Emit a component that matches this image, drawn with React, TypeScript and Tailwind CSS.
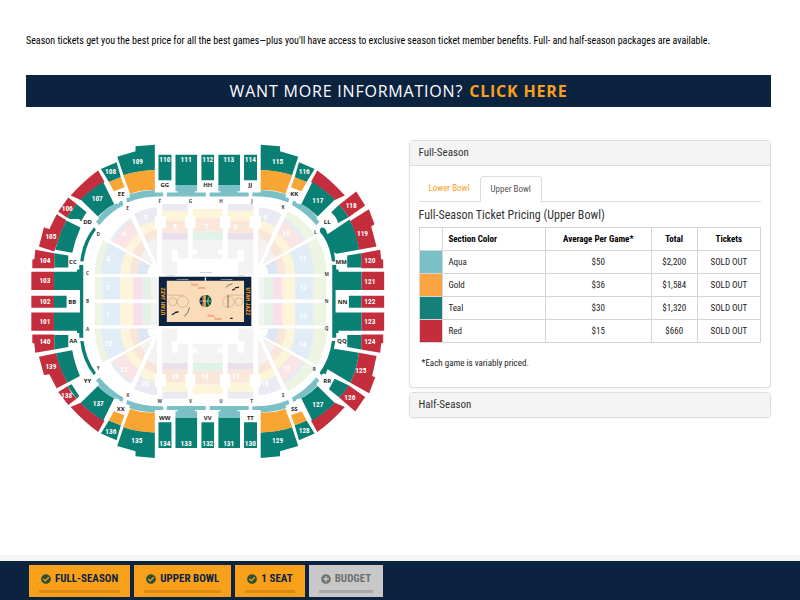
import { FaCheckCircle, FaPlusCircle } from "react-icons/fa";

const TEAL = "#0a8075";
const RED = "#c32d3c";
const GOLD = "#f9a534";
const AQUA = "#7ac0c6";

type Label = [string, number, number];

const sectionLabels: Label[] = [
  ["109", 353, 78], ["110", 435, 74], ["111", 499, 74], ["112", 564, 74], ["113", 627, 74], ["114", 692, 74],
  ["115", 774, 80], ["116", 854, 110], ["117", 895, 195], ["118", 995, 210], ["119", 1029, 296], ["120", 1051, 377],
  ["121", 1051, 439], ["122", 1051, 500], ["123", 1051, 561], ["124", 1051, 621], ["125", 1024, 706], ["126", 991, 788],
  ["127", 895, 808], ["128", 854, 888], ["129", 774, 918], ["130", 692, 925], ["131", 627, 925], ["132", 564, 925],
  ["133", 499, 925], ["134", 435, 925], ["135", 351, 917], ["136", 273, 889], ["137", 235, 807], ["138", 140, 781],
  ["139", 93, 695], ["140", 75, 621], ["101", 75, 561], ["102", 75, 500], ["103", 75, 438], ["104", 75, 377],
  ["105", 93, 306], ["106", 142, 219], ["107", 232, 190], ["108", 272, 110],
];

const portalLabels: Label[] = [
  ["EE", 304, 177], ["GG", 435, 149], ["HH", 564, 149], ["JJ", 692, 149], ["KK", 824, 176], ["LL", 923, 261],
  ["MM", 965, 382], ["NN", 969, 500], ["QQ", 967, 617], ["RR", 923, 740], ["SS", 824, 824], ["TT", 692, 849],
  ["VV", 564, 849], ["WW", 435, 849], ["XX", 303, 823], ["YY", 203, 740], ["AA", 160, 617], ["BB", 157, 500],
  ["CC", 159, 382], ["DD", 203, 261],
];

const rowLabels: Label[] = [
  ["F", 420, 199], ["G", 512, 199], ["H", 604, 199], ["J", 697, 199], ["K", 790, 216], ["L", 887, 292],
  ["M", 921, 420], ["N", 921, 501], ["Q", 921, 581], ["R", 884, 705], ["S", 790, 783], ["T", 696, 800],
  ["U", 604, 800], ["V", 512, 800], ["W", 420, 800], ["X", 324, 781], ["Y", 235, 702], ["A", 203, 585],
  ["B", 203, 500], ["C", 203, 416], ["D", 235, 298], ["E", 323, 221],
];

const bowlLabels: Label[] = [
  ["2", 265, 457], ["1", 265, 540], ["3", 265, 371], ["4", 313, 297], ["5", 377, 246], ["6", 466, 273],
  ["7", 560, 273], ["8", 648, 273], ["9", 737, 246], ["10", 800, 295], ["11", 849, 370], ["12", 851, 457],
  ["13", 851, 542], ["14", 849, 628], ["15", 800, 702], ["16", 735, 745], ["17", 648, 726], ["18", 556, 726],
  ["19", 466, 726], ["20", 377, 745], ["21", 313, 703], ["22", 265, 627],
];

function Labels({ items, size, color, font }: { items: Label[]; size: number; color: string; font: string }) {
  return (
    <g fontSize={size} fill={color} fontFamily={font} fontWeight="700" textAnchor="middle">
      {items.map(([text, x, y]) => (
        <text key={text} x={x} y={y + size * 0.36}>{text}</text>
      ))}
    </g>
  );
}

/* One quarter of the upper bowl, without the corner sections that differ per side. */
function UpperQuarter() {
  return (
    <g>
      <path fill={RED} d="M34 411H102V466H34ZM46 345L103 355V400H37V374L43 373ZM152 182Q195 135 235 107L254 141Q215 162 182 195Z" />
      <path fill={TEAL} d="M102 411H171V404H178V390H190V500H180V466H102ZM103 355L145 362V398H103ZM222 277L228 285Q198 325 191 380H181Q186 322 222 277Z" />
      <path fill={TEAL} d="M182 194Q215 162 250 141L283 208Q258 220 234 245ZM243 102L290 82L303 127L267 141ZM292 65L347 49V34L405 29V105Q350 108 311 121ZM416 59H455V136H416ZM467 59H532V150H467Z" />
      <path fill={GOLD} d="M267 141L303 127L314 157L282 169ZM310 121Q350 107 405 105V166Q365 163 331 177Z" />
      <path fill={AQUA} d="M467 150H532V169H526V173H558V185H441V173H474V169H467ZM319 191L331 186L328 179Q365 166 405 166V173H430V184Q370 183 322 203ZM228 260L238 271Q270 232 311 210L307 197L300 200L296 206L283 208Q255 222 236 246V254Z" />
    </g>
  );
}

/* The rounded corner of the lower bowl, drawn as nested rings cut by aisles. */
function LowerCorner({ id, wide }: { id: string; wide: boolean }) {
  const out = wide ? 209 : 190;
  const ring = (rx: number, ry: number, fill: string) => <ellipse cx="415" cy="418" rx={rx} ry={ry} fill={fill} />;
  return (
    <g>
      <clipPath id={id + "a"}><path d="M150 418H410L405 400L150 262Z" /></clipPath>
      <clipPath id={id + "b"}><path d="M150 248L398 388L300 180H150Z" /></clipPath>
      <clipPath id={id + "c"}><path d="M316 180L412 388V180Z" /></clipPath>
      <g clipPath={`url(#${id}a)`}>
        {ring(out, 210, "#eef4e2")}{ring(170, 190, "#e0edf7")}{ring(113, 130, "#fdf5d9")}
        {ring(85, 100, "#fae5da")}{ring(62, 75, "#dce7f3")}{ring(32, 38, "#ffffff")}
      </g>
      <g clipPath={`url(#${id}b)`}>
        {wide && ring(out, 210, "#eef4e2")}
        {ring(170, 192, "#e0edf7")}{ring(162, 184, "#fbe4e5")}{ring(118, 142, "#fdf5d9")}{ring(90, 118, "#fae5da")}{ring(65, 92, "#f3f3f4")}
      </g>
      <g clipPath={`url(#${id}c)`}>
        {ring(170, 200, "#ebe9f2")}{ring(118, 160, "#fdf5d9")}{ring(90, 134, "#fae5da")}{ring(65, 108, "#f3f3f4")}
      </g>
    </g>
  );
}

function LowerHalf() {
  return (
    <g>
      <path fill="#ebe9f2" d="M427 207H504V228H427Z" />
      <path fill="#fdf5d9" d="M427 228H504V257H427ZM519 222H564V250H519Z" />
      <path fill="#fbe6da" d="M427 257H504V294H427ZM519 250H564V290H519Z" />
      <path fill="#eadfec" d="M427 294H504V315H427Z" />
      <path fill="#e0f1e8" d="M519 290H564V315H519Z" />
      <path fill="#f3f3f4" d="M427 315H504V372H475V345H456V380H472V418H427ZM519 315H564V372H519V358H533V345H519Z" />
      <path fill="#ffffff" d="M405 243H438V280H405ZM496 243H527V280H496Z" />
      <path fill="#f3f3f4" d="M395 427H412V494H395Z" />
    </g>
  );
}

function SideRows({ wide }: { wide: boolean }) {
  return (
    <g>
      <path fill="#eef4e2" d={wide ? "M208 427H258V494H208Z" : "M225 427H247V494H225Z"} />
      <path fill="#e0edf7" d="M247 427H302V494H247Z" />
      <path fill="#fdf5d9" d="M302 427H340V494H302Z" />
      <path fill="#f8dfe9" d="M340 427H368V494H340Z" />
      <path fill="#e3f1e6" d="M368 427H395V494H368Z" />
    </g>
  );
}

function Court() {
  return (
    <g>
      <path fill="#0c2340" d="M417 426H695V574H417Z" />
      <path fill="#fbdcb8" d="M441 438H673V562H441Z" />
      <g fill="none" stroke="#b39c84" strokeWidth="1.5">
        <path d="M441 481H490M673 481H625" />
        <circle cx="489" cy="501" r="17" />
        <circle cx="459" cy="501" r="12" />
        <circle cx="626" cy="501" r="17" />
        <circle cx="658" cy="501" r="12" />
      </g>
      <path fill="none" stroke="#333333" strokeWidth="2" d="M625 481V518M494 545Q507 533 509 518M618 458Q626 449 638 447" />
      <path fill="none" stroke="#172b40" strokeWidth="4" d="M456 540l8 -4M464 534l12 -3M638 466l8 -4M646 459l12 -2M631 551h8" />
      <circle cx="557" cy="499" r="18" fill="#0c2340" />
      <path fill="#f9a01b" d="M549 482Q556 479 556 483V515Q556 519 549 516Q555 499 549 482Z" />
      <path fill="#00573f" d="M560 481Q574 483 575 499Q574 515 560 517Z" />
      <path stroke="#fbdcb8" strokeWidth="2" fill="none" d="M539 499H575M557 481V517M546 485Q556 499 546 513M569 485Q559 499 569 513" />
      <g fontFamily="Roboto" fontWeight="700" fill="#e98b55" fontSize="8">
        <text x="514" y="454">Vivint</text>
        <text x="535" y="464">Arena</text>
        <text x="563" y="546">Vivint</text>
        <text x="584" y="556">Arena</text>
      </g>
      <g fontFamily="Roboto Condensed, Liberation Sans Narrow, sans-serif" fontWeight="700" fill="#f9a01b" fontSize="18" textAnchor="middle">
        <text transform="translate(436 500) rotate(-90)">UTAH JAZZ</text>
        <text transform="translate(678 500) rotate(90)">UTAH JAZZ</text>
      </g>
      <g fontFamily="Roboto" fill="#9a9a9a" fontSize="7" textAnchor="middle">
        <text x="558" y="416">COURTSIDE</text>
        <text x="451" y="424">VISITOR</text>
        <text x="664" y="424">HOME</text>
      </g>
      <g fontFamily="Roboto" fill="#ffffff" fontSize="7" textAnchor="middle">
        <text x="488" y="436">vivint arena</text>
        <text x="620" y="436">vivint arena</text>
      </g>
      <path fill="#ffffff" d="M555 428H559V438H555Z" />
    </g>
  );
}

const flipX = "translate(1128 0) scale(-1 1)";
const flipY = "translate(0 999) scale(1 -1)";
const flipXY = "translate(1128 999) scale(-1 -1)";

function SeatMap() {
  return (
    <svg viewBox="18 15 1089 978" className="block w-full" role="img" aria-label="Arena seating map">
      {[undefined, flipX, flipY, flipXY].map((t, i) => (
        <g key={i} transform={t}>
          <LowerCorner id={"corner" + i} wide={i % 2 === 1} />
          <LowerHalf />
          <SideRows wide={i % 2 === 1} />
          <UpperQuarter />
        </g>
      ))}
      <path fill={TEAL} d="M545 59H583V136H545ZM545 863H583V940H545ZM102 483H140V519H102ZM988 483H1026V519H988Z" />
      <path fill={RED} d="M34 483H102V519H34ZM1026 483H1094V519H1026Z" />

      <path fill={RED} d="M145 188L170 207L140 248L115 230ZM110 238L139 256Q118 300 103 350L57 335L72 277L88 283Z" />
      <path fill={TEAL} d="M170 207L200 232L183 260L178 252L150 252L140 247ZM139 257L182 278Q165 315 157 354L106 345Q118 298 139 257Z" />
      <path fill={RED} d="M115 772L143 755Q152 775 170 792L145 811ZM57 666L108 656Q122 705 142 744L110 761L88 719L72 721Z" />
      <path fill={TEAL} d="M143 755L155 749L178 784L170 792ZM108 656L157 647Q163 684 180 724L142 744Q120 705 108 656Z" />

      <path fill={RED} d="M1010 170L1037 212L987 247Q975 225 958 210ZM992 258L1048 223L1065 268L1055 275L1071 335L1018 345Q1010 298 992 258Z" />
      <path fill={TEAL} d="M958 210Q975 225 987 247L956 264L949 248L935 232ZM900 290L910 277L918 283L924 298L990 254Q1013 300 1018 345L950 357L944 352V382L938 378Q935 330 900 290Z" />
      <path fill={RED} d="M987 752L1037 787L1007 831L958 788Q975 772 987 752ZM1018 654L1071 664L1058 724L1067 728L1049 776L992 744Q1012 705 1018 654Z" />
      <path fill={TEAL} d="M945 732L987 752Q975 775 958 788L928 764ZM944 647V642L1018 654Q1012 705 992 744L924 704L918 719L905 714Q935 668 938 620Z" />

      <path stroke="#ffffff" strokeWidth="8" d="M174 385H196M174 615H196M932 385H954M932 615H954" />
      <Court />
      <Labels items={bowlLabels} size={22} color="#ffffff" font="Roboto Condensed, Liberation Sans Narrow, sans-serif" />
      <Labels items={sectionLabels} size={22} color="#ffffff" font="Roboto Condensed, Liberation Sans Narrow, sans-serif" />
      <Labels items={portalLabels} size={18} color="#222222" font="Open Sans, sans-serif" />
      <Labels items={rowLabels} size={14} color="#444444" font="Open Sans, sans-serif" />
    </svg>
  );
}

const prices = [
  { name: "Aqua", swatch: "bg-[#7ac0c6]", avg: "$50", total: "$2,200" },
  { name: "Gold", swatch: "bg-[#faa441]", avg: "$36", total: "$1,584" },
  { name: "Teal", swatch: "bg-[#15807a]", avg: "$30", total: "$1,320" },
  { name: "Red", swatch: "bg-[#c32d3c]", avg: "$15", total: "$660" },
];

const cell = "h-[23px] border border-[#d5d5d5]";

function PricingTable() {
  return (
    <table className="w-full table-fixed border-collapse text-center text-[9px] leading-4 text-[#222]">
      <colgroup>
        <col className="w-[7%]" />
        <col className="w-[30%]" />
        <col className="w-[31%]" />
        <col className="w-[13.5%]" />
        <col />
      </colgroup>
      <thead>
        <tr className="text-black">
          <th className={cell} aria-label="Swatch" />
          <th className={cell + " pl-[5px] text-left"}>Section Color</th>
          <th className={cell}>Average Per Game*</th>
          <th className={cell}>Total</th>
          <th className={cell}>Tickets</th>
        </tr>
      </thead>
      <tbody>
        {prices.map((p) => (
          <tr key={p.name}>
            <td className={cell + " " + p.swatch} />
            <td className={cell + " pl-[5px] text-left"}>{p.name}</td>
            <td className={cell}>{p.avg}</td>
            <td className={cell}>{p.total}</td>
            <td className={cell}>SOLD OUT</td>
          </tr>
        ))}
      </tbody>
    </table>
  );
}

function Step({ label, done }: { label: string; done: boolean }) {
  const Icon = done ? FaCheckCircle : FaPlusCircle;
  return (
    <button
      className={
        "flex h-8 flex-col justify-between px-2.5 pt-1.5 pb-1 text-[11px] leading-4 font-bold " +
        (done ? "bg-[#f9a01b] text-[#0c2340]" : "bg-[#c8c8c8] text-[#707070]")
      }
    >
      <span className="flex items-center gap-1 px-0.5">
        <Icon className={"size-2.5 " + (done ? "text-[#2b5034]" : "text-[#707070]")} />
        {label}
      </span>
      <span className={"h-[3px] w-full " + (done ? "bg-[#d98a15]" : "bg-[#a8a8a8]")} />
    </button>
  );
}

export default function App() {
  return (
    <div className="flex min-h-screen flex-col bg-white font-['Roboto_Condensed','Liberation_Sans_Narrow',sans-serif] text-[#333]">
      <main className="flex-1 pr-[29px] pl-[26px]">
        <p className="pt-[33px] text-[10px] leading-4 text-black">
          Season tickets get you the best price for all the best games—plus you'll have access to exclusive season ticket member benefits. Full- and half-season packages are available.
        </p>
        <a href="#info" className="mt-[26px] flex h-8 items-center justify-center gap-1.5 bg-[#0c2340] font-['Open_Sans',sans-serif] text-[16px] tracking-wider text-white">
          WANT MORE INFORMATION? <strong className="font-bold text-[#f9a01b]">CLICK HERE</strong>
        </a>
        <div className="mt-[33px] grid grid-cols-2 items-start gap-5">
          <SeatMap />
          <div className="flex flex-col gap-1">
            <section className="rounded-sm border border-[#ddd] shadow-xs">
              <h2>
                <button className="block w-full border-b border-[#ddd] bg-[#f4f4f4] px-[9px] text-left text-[11px] leading-6">Full-Season</button>
              </h2>
              <div className="px-[9px] pt-2.5 pb-4">
                <div role="tablist" className="flex border-b border-[#ddd] text-[9px] leading-[25px]">
                  <button role="tab" aria-selected="false" className="px-2.5 text-[#f9a01b]">Lower Bowl</button>
                  <button role="tab" aria-selected="true" className="-mb-px rounded-t-sm border border-b-0 border-[#ddd] bg-white px-2.5 text-[#555]">Upper Bowl</button>
                </div>
                <h3 className="pt-[5px] pb-1 text-[12px] leading-4">Full-Season Ticket Pricing (Upper Bowl)</h3>
                <PricingTable />
                <p className="px-[3px] pt-3 text-[9px] leading-4 text-[#222]">*Each game is variably priced.</p>
              </div>
            </section>
            <section className="overflow-hidden rounded-sm border border-[#ddd] shadow-xs">
              <h2>
                <button className="block w-full bg-[#f4f4f4] px-[9px] text-left text-[11px] leading-6">Half-Season</button>
              </h2>
            </section>
          </div>
        </div>
      </main>
      <footer className="flex gap-1 border-t-[6px] border-[#f4f4f4] bg-[#0c2340] px-[29px] pt-1 pb-[3px]">
        <Step label="FULL-SEASON" done />
        <Step label="UPPER BOWL" done />
        <Step label="1 SEAT" done />
        <Step label="BUDGET" done={false} />
      </footer>
    </div>
  );
}
